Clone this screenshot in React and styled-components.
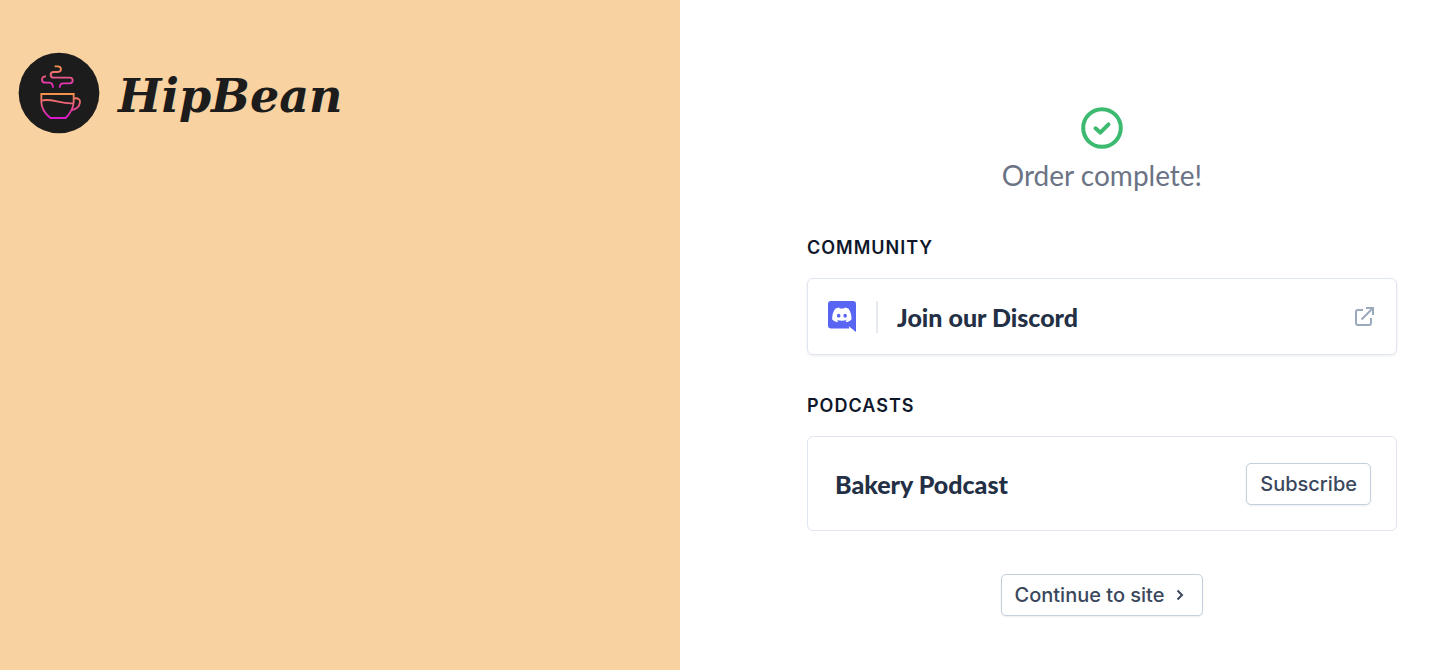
import React from "react";
import styled, { createGlobalStyle } from "styled-components";

const GlobalStyle = createGlobalStyle`
  *, *::before, *::after { box-sizing: border-box; }
  body {
    margin: 0;
    background: #fff;
    font-family: Inter, "Liberation Sans", sans-serif;
    -webkit-font-smoothing: antialiased;
  }
`;

const Page = styled.div`
  display: grid;
  grid-template-columns: 680fr 760fr;
  min-height: 100vh;
`;

const BrandPanel = styled.aside`
  background: #f8d2a0;
  padding: 52px 18px;
`;

const Brand = styled.a`
  display: inline-flex;
  align-items: center;
  gap: 18px;
  color: #1c1c1c;
  text-decoration: none;
`;

const BrandName = styled.span`
  padding-top: 6px;
  font: italic 700 46px/48px "DejaVu Serif", "Liberation Serif", serif;
`;

const Content = styled.main`
  display: flex;
  flex-direction: column;
  align-items: center;
  padding: 107px 43px 54px 127px;
`;

const Status = styled.h1`
  margin: 8px 0 43px;
  font: 400 28px/36px Lato, sans-serif;
  color: #6b7385;
`;

const Section = styled.section`
  width: 100%;
  margin-bottom: ${(p) => (p.$last ? 43 : 39)}px;
`;

const SectionTitle = styled.h2`
  margin: 0 0 18px;
  font-size: 18px;
  line-height: 24px;
  font-weight: 600;
  letter-spacing: 1px;
  text-transform: uppercase;
  color: #0f172a;
`;

const cardBorder = "1px solid #dfe6ef";

const LinkCard = styled.a`
  display: flex;
  align-items: center;
  height: 77px;
  padding: 0 22px 0 20px;
  border: ${cardBorder};
  border-radius: 6px;
  box-shadow: 0 1px 3px rgba(15, 23, 42, 0.08);
  text-decoration: none;
`;

const Card = styled.div`
  display: flex;
  align-items: center;
  justify-content: space-between;
  height: 95px;
  padding: 0 25px 0 27px;
  border: ${cardBorder};
  border-radius: 6px;
`;

const Divider = styled.span`
  width: 2px;
  height: 32px;
  margin: 0 19px 0 20px;
  background: #e5eaf1;
`;

const CardTitle = styled.span`
  flex: 1;
  font: 900 25px/32px Lato, sans-serif;
  color: #232f45;
`;

const Button = styled.button`
  display: inline-flex;
  align-items: center;
  gap: 12px;
  height: 42px;
  padding: 0 ${(p) => (p.$withIcon ? 18 : 13)}px 0 13px;
  border: 1px solid #c5d0de;
  border-radius: 5px;
  background: #fff;
  box-shadow: 0 1px 2px rgba(15, 23, 42, 0.08);
  font: 500 20px/28px Inter, sans-serif;
  color: #3a475c;
  cursor: pointer;
`;

const CupLogo = () => (
  <svg width="82" height="82" viewBox="55 37 246 246" aria-hidden="true">
    <defs>
      <linearGradient id="steam" gradientUnits="userSpaceOnUse" x1="0" y1="80" x2="0" y2="144">
        <stop offset="0" stopColor="#f5924a" />
        <stop offset="0.5" stopColor="#e85c86" />
        <stop offset="1" stopColor="#df1fc8" />
      </linearGradient>
      <linearGradient id="cup" gradientUnits="userSpaceOnUse" x1="0" y1="162" x2="0" y2="237">
        <stop offset="0" stopColor="#f5924a" />
        <stop offset="0.45" stopColor="#e9587f" />
        <stop offset="1" stopColor="#dc14cf" />
      </linearGradient>
    </defs>
    <circle cx="178" cy="160" r="121" fill="#1c1c1c" />
    <g fill="none" strokeWidth="5.5">
      <g stroke="url(#steam)">
        <path d="M165 80H174Q184 80 184 89Q184 97 174 97H162Q153 97 153 105Q153 114 162 114H210Q219 114 219 122Q219 131 210 131H192Q180 131 180 144" />
        <path d="M139 110Q127 110 127 120Q127 129 137 129H149Q160 130 160 144" />
      </g>
      <g stroke="url(#cup)">
        <path d="M125 163H222V187Q221 212 198 235H152Q125 212 125 187Z" />
        <path d="M125 183C155 174 180 194 222 191" />
        <path d="M222 177C235 173 242 180 241 188C239 202 229 209 216 211" />
      </g>
    </g>
  </svg>
);

const CheckIcon = () => (
  <svg width="42" height="42" viewBox="0 0 42 42" fill="none" stroke="#3cba70" aria-hidden="true">
    <circle cx="21" cy="21" r="18.8" strokeWidth="4" />
    <path d="M14.5 21.3L19.3 25.6L27.5 17.3" strokeWidth="4" strokeLinecap="round" strokeLinejoin="round" />
  </svg>
);

const DiscordIcon = () => (
  <svg width="28" height="32" viewBox="0 0 28 32" aria-hidden="true">
    <path d="M3 0H25Q28 0 28 3V31L20.5 25L21.5 27.5H3Q0 27.5 0 24.5V3Q0 0 3 0Z" fill="#5865f2" />
    <path
      transform="translate(4.2 4.2) scale(.81)"
      fill="#fff"
      d="M20.317 4.37a19.8 19.8 0 0 0-4.885-1.515.074.074 0 0 0-.079.037c-.21.375-.444.864-.608 1.25a18.3 18.3 0 0 0-5.487 0 12.6 12.6 0 0 0-.617-1.25.077.077 0 0 0-.079-.037A19.7 19.7 0 0 0 3.677 4.37C.533 9.046-.32 13.58.099 18.057a.082.082 0 0 0 .031.057 19.9 19.9 0 0 0 5.993 3.03.078.078 0 0 0 .084-.028c.462-.63.874-1.295 1.226-1.994a.076.076 0 0 0-.041-.106 13.1 13.1 0 0 1-1.872-.892l.372-.292c3.928 1.793 8.18 1.793 12.062 0l.373.292c-.598.35-1.22.645-1.873.892a.077.077 0 0 0-.041.107c.36.698.772 1.362 1.225 1.993a.076.076 0 0 0 .084.028 19.8 19.8 0 0 0 6.002-3.03.077.077 0 0 0 .032-.054c.5-5.177-.838-9.674-3.549-13.66zM8.02 15.33c-1.183 0-2.157-1.085-2.157-2.419s.956-2.419 2.157-2.419c1.21 0 2.176 1.096 2.157 2.42 0 1.333-.956 2.418-2.157 2.418zm7.975 0c-1.183 0-2.157-1.085-2.157-2.419s.955-2.419 2.157-2.419c1.21 0 2.176 1.096 2.157 2.42 0 1.333-.946 2.418-2.157 2.418z"
    />
  </svg>
);

const ExternalIcon = () => (
  <svg width="20" height="20" viewBox="0 0 20 20" fill="none" stroke="#9ba9bd" strokeWidth="2" aria-hidden="true">
    <path d="M9 3H4Q2 3 2 5V16Q2 18 4 18H15Q17 18 17 16V11" />
    <path d="M7.5 12.5L18.5 1.5M12 1H19V8" />
  </svg>
);

const Chevron = () => (
  <svg width="8" height="12" viewBox="0 0 8 12" fill="none" stroke="#3a475c" strokeWidth="2" aria-hidden="true">
    <path d="M1.5 1.5L6 6L1.5 10.5" />
  </svg>
);

export default function App() {
  return (
    <>
      <GlobalStyle />
      <Page>
        <BrandPanel>
          <Brand href="#">
            <CupLogo />
            <BrandName>HipBean</BrandName>
          </Brand>
        </BrandPanel>
        <Content>
          <CheckIcon />
          <Status>Order complete!</Status>
          <Section>
            <SectionTitle>Community</SectionTitle>
            <LinkCard href="#">
              <DiscordIcon />
              <Divider />
              <CardTitle>Join our Discord</CardTitle>
              <ExternalIcon />
            </LinkCard>
          </Section>
          <Section $last>
            <SectionTitle>Podcasts</SectionTitle>
            <Card>
              <CardTitle>Bakery Podcast</CardTitle>
              <Button type="button">Subscribe</Button>
            </Card>
          </Section>
          <Button type="button" $withIcon>
            Continue to site
            <Chevron />
          </Button>
        </Content>
      </Page>
    </>
  );
}
